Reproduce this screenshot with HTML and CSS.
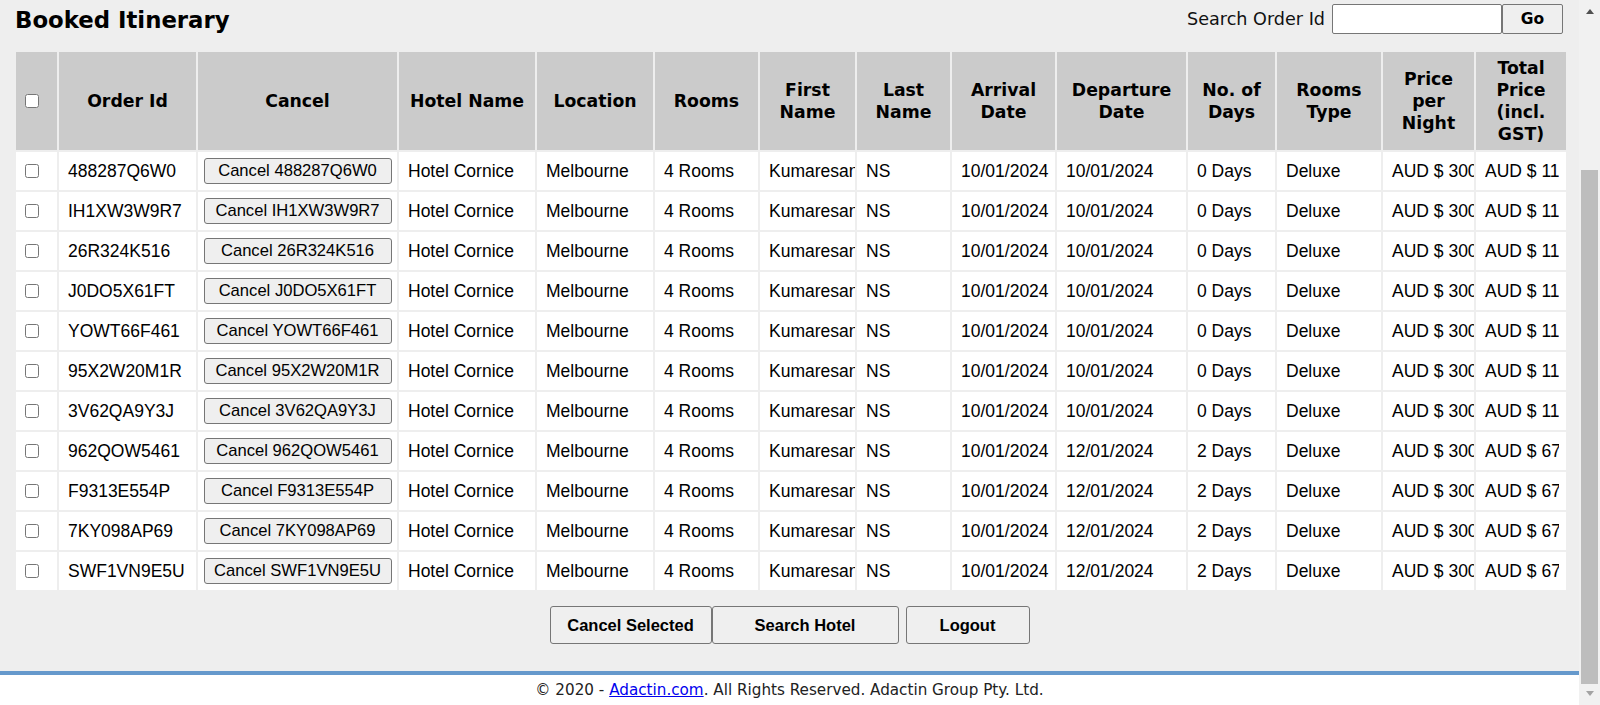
FILE: index.html
```html
<!DOCTYPE html>
<html lang="en">
<head>
<meta charset="utf-8">
<title>Booked Itinerary</title>
<link rel="stylesheet" href="styles.css">
</head>
<body>
<div class="viewport">
  <div class="page">
    <div class="topbar">
      <h2 class="title">Booked Itinerary</h2>
      <div class="search">
        <span class="search-label">Search Order Id</span>
        <input class="search-input" type="text">
        <button class="go-btn">Go</button>
      </div>
    </div>
    <div class="table-wrap">
      <table class="itinerary">
        <colgroup>
          <col class="w-cb"><col class="w-order"><col class="w-cancel"><col class="w-hotel"><col class="w-loc"><col class="w-rooms"><col class="w-first"><col class="w-last"><col class="w-arr"><col class="w-dep"><col class="w-days"><col class="w-type"><col class="w-price"><col class="w-total">
        </colgroup>
        <thead>
          <tr>
            <th class="cb-head"><input type="checkbox" class="chk"></th>
            <th>Order Id</th>
            <th>Cancel</th>
            <th>Hotel Name</th>
            <th>Location</th>
            <th>Rooms</th>
            <th>First Name</th>
            <th>Last Name</th>
            <th>Arrival Date</th>
            <th>Departure Date</th>
            <th>No. of Days</th>
            <th>Rooms Type</th>
            <th>Price per Night</th>
            <th>Total Price (incl. GST)</th>
          </tr>
        </thead>
        <tbody>
          <tr><td class="cb"><input type="checkbox" class="chk"></td><td>488287Q6W0</td><td class="cancel"><button class="cancel-btn">Cancel 488287Q6W0</button></td><td>Hotel Cornice</td><td>Melbourne</td><td>4 Rooms</td><td class="first">Kumaresan</td><td>NS</td><td>10/01/2024</td><td>10/01/2024</td><td>0 Days</td><td>Deluxe</td><td>AUD $ 300</td><td class="total"><span class="clip">AUD $ 1188</span></td></tr>
          <tr><td class="cb"><input type="checkbox" class="chk"></td><td>IH1XW3W9R7</td><td class="cancel"><button class="cancel-btn">Cancel IH1XW3W9R7</button></td><td>Hotel Cornice</td><td>Melbourne</td><td>4 Rooms</td><td class="first">Kumaresan</td><td>NS</td><td>10/01/2024</td><td>10/01/2024</td><td>0 Days</td><td>Deluxe</td><td>AUD $ 300</td><td class="total"><span class="clip">AUD $ 1188</span></td></tr>
          <tr><td class="cb"><input type="checkbox" class="chk"></td><td>26R324K516</td><td class="cancel"><button class="cancel-btn">Cancel 26R324K516</button></td><td>Hotel Cornice</td><td>Melbourne</td><td>4 Rooms</td><td class="first">Kumaresan</td><td>NS</td><td>10/01/2024</td><td>10/01/2024</td><td>0 Days</td><td>Deluxe</td><td>AUD $ 300</td><td class="total"><span class="clip">AUD $ 1188</span></td></tr>
          <tr><td class="cb"><input type="checkbox" class="chk"></td><td>J0DO5X61FT</td><td class="cancel"><button class="cancel-btn">Cancel J0DO5X61FT</button></td><td>Hotel Cornice</td><td>Melbourne</td><td>4 Rooms</td><td class="first">Kumaresan</td><td>NS</td><td>10/01/2024</td><td>10/01/2024</td><td>0 Days</td><td>Deluxe</td><td>AUD $ 300</td><td class="total"><span class="clip">AUD $ 1188</span></td></tr>
          <tr><td class="cb"><input type="checkbox" class="chk"></td><td>YOWT66F461</td><td class="cancel"><button class="cancel-btn">Cancel YOWT66F461</button></td><td>Hotel Cornice</td><td>Melbourne</td><td>4 Rooms</td><td class="first">Kumaresan</td><td>NS</td><td>10/01/2024</td><td>10/01/2024</td><td>0 Days</td><td>Deluxe</td><td>AUD $ 300</td><td class="total"><span class="clip">AUD $ 1188</span></td></tr>
          <tr><td class="cb"><input type="checkbox" class="chk"></td><td>95X2W20M1R</td><td class="cancel"><button class="cancel-btn">Cancel 95X2W20M1R</button></td><td>Hotel Cornice</td><td>Melbourne</td><td>4 Rooms</td><td class="first">Kumaresan</td><td>NS</td><td>10/01/2024</td><td>10/01/2024</td><td>0 Days</td><td>Deluxe</td><td>AUD $ 300</td><td class="total"><span class="clip">AUD $ 1188</span></td></tr>
          <tr><td class="cb"><input type="checkbox" class="chk"></td><td>3V62QA9Y3J</td><td class="cancel"><button class="cancel-btn">Cancel 3V62QA9Y3J</button></td><td>Hotel Cornice</td><td>Melbourne</td><td>4 Rooms</td><td class="first">Kumaresan</td><td>NS</td><td>10/01/2024</td><td>10/01/2024</td><td>0 Days</td><td>Deluxe</td><td>AUD $ 300</td><td class="total"><span class="clip">AUD $ 1188</span></td></tr>
          <tr><td class="cb"><input type="checkbox" class="chk"></td><td>962QOW5461</td><td class="cancel"><button class="cancel-btn">Cancel 962QOW5461</button></td><td>Hotel Cornice</td><td>Melbourne</td><td>4 Rooms</td><td class="first">Kumaresan</td><td>NS</td><td>10/01/2024</td><td>12/01/2024</td><td>2 Days</td><td>Deluxe</td><td>AUD $ 300</td><td class="total"><span class="clip">AUD $ 6720</span></td></tr>
          <tr><td class="cb"><input type="checkbox" class="chk"></td><td>F9313E554P</td><td class="cancel"><button class="cancel-btn">Cancel F9313E554P</button></td><td>Hotel Cornice</td><td>Melbourne</td><td>4 Rooms</td><td class="first">Kumaresan</td><td>NS</td><td>10/01/2024</td><td>12/01/2024</td><td>2 Days</td><td>Deluxe</td><td>AUD $ 300</td><td class="total"><span class="clip">AUD $ 6720</span></td></tr>
          <tr><td class="cb"><input type="checkbox" class="chk"></td><td>7KY098AP69</td><td class="cancel"><button class="cancel-btn">Cancel 7KY098AP69</button></td><td>Hotel Cornice</td><td>Melbourne</td><td>4 Rooms</td><td class="first">Kumaresan</td><td>NS</td><td>10/01/2024</td><td>12/01/2024</td><td>2 Days</td><td>Deluxe</td><td>AUD $ 300</td><td class="total"><span class="clip">AUD $ 6720</span></td></tr>
          <tr><td class="cb"><input type="checkbox" class="chk"></td><td>SWF1VN9E5U</td><td class="cancel"><button class="cancel-btn">Cancel SWF1VN9E5U</button></td><td>Hotel Cornice</td><td>Melbourne</td><td>4 Rooms</td><td class="first">Kumaresan</td><td>NS</td><td>10/01/2024</td><td>12/01/2024</td><td>2 Days</td><td>Deluxe</td><td>AUD $ 300</td><td class="total"><span class="clip">AUD $ 6720</span></td></tr>
        </tbody>
      </table>
    </div>
    <div class="actions">
      <button class="act-btn btn-cancel-sel">Cancel Selected</button><button class="act-btn btn-search">Search Hotel</button><button class="act-btn btn-logout">Logout</button>
    </div>
    <div class="footer">© 2020 - <a href="#" class="footer-link">Adactin.com</a>. All Rights Reserved. Adactin Group Pty. Ltd.</div>
  </div>
  <div class="scrollbar">
    <div class="sb-btn sb-up"><span class="arrow-up"></span></div>
    <div class="sb-track"></div>
    <div class="sb-thumb"></div>
    <div class="sb-btn sb-down"><span class="arrow-down"></span></div>
  </div>
</div>
</body>
</html>
```

FILE: styles.css
```css
html, body {
  margin: 0;
  padding: 0;
  overflow: hidden;
  background: #eeeeee;
}

.viewport {
  display: flex;
  width: 1600px;
  height: 705px;
}

.page {
  flex: 1;
  display: flex;
  flex-direction: column;
  background: #eeeeee;
  min-width: 0;
}

.topbar {
  height: 50px;
  display: flex;
  justify-content: space-between;
  align-items: flex-start;
  padding: 0 16px 0 15px;
  box-sizing: border-box;
}

.title {
  margin: 0;
  padding-top: 7px;
  font-family: "DejaVu Sans", Verdana, sans-serif;
  font-weight: bold;
  font-size: 22.8px;
  line-height: 26px;
  color: #000;
}

.search {
  display: flex;
  align-items: center;
  padding-top: 4px;
}

.search-label {
  font-family: "DejaVu Sans", Verdana, sans-serif;
  font-size: 17.6px;
  color: #111;
  margin-right: 7px;
}

.search-input {
  width: 170px;
  height: 30px;
  box-sizing: border-box;
  border: 1px solid #767676;
  border-radius: 2px;
  background: #fff;
  margin: 0;
  padding: 0 4px;
}

.go-btn {
  width: 61px;
  height: 30px;
  box-sizing: border-box;
  border: 1px solid #767676;
  border-radius: 2px;
  background: #efefef;
  margin: 0;
  padding: 0;
  font-family: "DejaVu Sans", Verdana, sans-serif;
  font-weight: bold;
  font-size: 15.5px;
  color: #000;
}

.table-wrap {
  padding: 0 13px 0 14px;
}

.itinerary {
  width: 1552px;
  table-layout: fixed;
  border-collapse: collapse;
}

.w-cb { width: 43px; }
.w-order { width: 139px; }
.w-cancel { width: 201px; }
.w-hotel { width: 138px; }
.w-loc { width: 118px; }
.w-rooms { width: 105px; }
.w-first { width: 97px; }
.w-last { width: 95px; }
.w-arr { width: 105px; }
.w-dep { width: 131px; }
.w-days { width: 89px; }
.w-type { width: 106px; }
.w-price { width: 93px; }
.w-total { width: 92px; }

.itinerary th {
  background: #cbcbcb;
  height: 98px;
  border: 2px solid #eeeeee;
  padding: 0 5px;
  text-align: center;
  vertical-align: middle;
  font-family: "DejaVu Sans", Verdana, sans-serif;
  font-weight: bold;
  font-size: 17.3px;
  line-height: 22px;
  color: #000;
}

.itinerary th.cb-head {
  text-align: left;
  padding: 0 0 0 9px;
}

.itinerary td {
  background: #ffffff;
  height: 38px;
  border: 2px solid #eeeeee;
  padding: 0 3px 0 9px;
  vertical-align: middle;
  white-space: nowrap;
  overflow: hidden;
  font-family: "Liberation Sans", Arial, sans-serif;
  font-size: 17.5px;
  color: #000;
}

.itinerary td.cb {
  padding: 0 0 0 9px;
}

.itinerary td.cancel {
  padding: 0;
  text-align: center;
}

.itinerary td.first {
  padding-right: 4px;
}

.itinerary td.total {
  padding-right: 7px;
}

.clip {
  display: block;
  overflow: hidden;
}

.chk {
  width: 14px;
  height: 14px;
  margin: 0;
  display: block;
}

.cancel-btn {
  width: 188px;
  height: 26px;
  box-sizing: border-box;
  border: 1px solid #767676;
  border-radius: 3px;
  background: #efefef;
  padding: 0;
  margin: 0;
  font-family: "Liberation Sans", Arial, sans-serif;
  font-size: 16.6px;
  color: #000;
}

.actions {
  display: flex;
  justify-content: center;
  margin-top: 14px;
}

.act-btn {
  height: 38px;
  box-sizing: border-box;
  border: 1px solid #767676;
  border-radius: 3px;
  background: #efefef;
  padding: 0;
  margin: 0;
  font-family: "Liberation Sans", Arial, sans-serif;
  font-weight: bold;
  font-size: 16.5px;
  color: #000;
}

.btn-cancel-sel { width: 162px; }
.btn-search { width: 187px; }
.btn-logout { width: 124px; margin-left: 7px; }

.footer {
  margin-top: auto;
  height: 34px;
  box-sizing: border-box;
  border-top: 4px solid #6699cc;
  background: #ffffff;
  padding-top: 6px;
  text-align: center;
  font-family: "DejaVu Sans", Verdana, sans-serif;
  font-size: 15.2px;
  line-height: 18px;
  color: #222;
}

.footer-link {
  color: #0000ee;
  text-decoration: underline;
}

.scrollbar {
  width: 21px;
  height: 705px;
  background: #f1f1f1;
  display: flex;
  flex-direction: column;
  align-items: center;
}

.sb-btn {
  width: 21px;
  height: 21px;
  display: flex;
  justify-content: center;
  box-sizing: border-box;
}

.sb-up { padding-top: 9px; }
.sb-down { padding-top: 7px; }

.arrow-up {
  width: 0;
  height: 0;
  border-left: 4.5px solid transparent;
  border-right: 4.5px solid transparent;
  border-bottom: 5px solid #505050;
}

.arrow-down {
  width: 0;
  height: 0;
  border-left: 4.5px solid transparent;
  border-right: 4.5px solid transparent;
  border-top: 5px solid #a3a3a3;
}

.sb-track {
  height: 149px;
}

.sb-thumb {
  width: 17px;
  height: 514px;
  background: #bdbdbd;
}
```
